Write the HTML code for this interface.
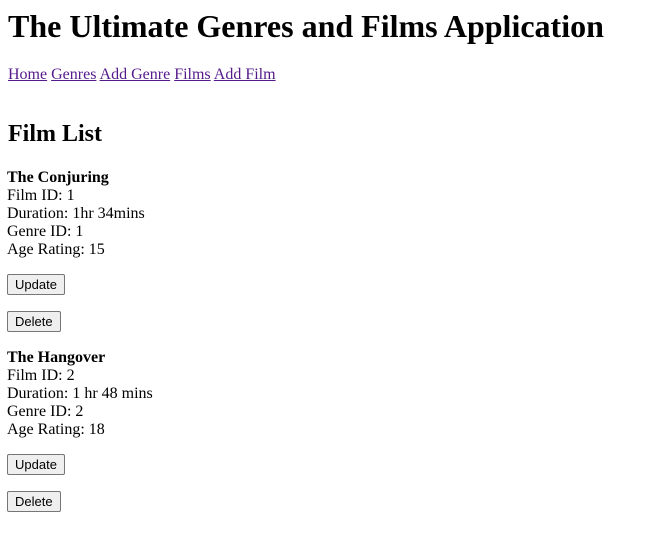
<!DOCTYPE html>
<html><head><meta charset="utf-8"><style>
html,body{margin:0;padding:0;background:#fff;}
body{margin:8px;font-family:"Liberation Serif",serif;font-size:16px;line-height:18px;color:#000;}
h1{font-size:32px;line-height:37px;margin:0 0 21px 0;font-weight:bold;}
nav a{color:#551a8b;text-decoration:underline;}
h2{font-size:24px;line-height:28px;margin:36px 0 21px 0;font-weight:bold;}
.film{margin-left:-1px;}
.film p{margin:16px 0;height:21px;}
button{font-family:"Liberation Sans",sans-serif;font-size:13px;line-height:15px;padding:2px 7px;border:1px solid #767676;border-radius:2px;background:#efefef;color:#000;height:21px;margin:0;}
</style></head><body>
<h1>The Ultimate Genres and Films Application</h1>
<nav><a>Home</a> <a>Genres</a> <a>Add Genre</a> <a>Films</a> <a>Add Film</a></nav>
<h2>Film List</h2>
<div class="film">
<b>The Conjuring</b><br>Film ID: 1<br>Duration: 1hr 34mins<br>Genre ID: 1<br>Age Rating: 15
<p style="margin-top:15px"><button>Update</button></p>
<p><button>Delete</button></p>
</div>
<div class="film" style="padding-top:1px">
<b>The Hangover</b><br>Film ID: 2<br>Duration: 1 hr 48 mins<br>Genre ID: 2<br>Age Rating: 18
<p style="margin-top:15px"><button>Update</button></p>
<p><button>Delete</button></p>
</div>
</body></html>
